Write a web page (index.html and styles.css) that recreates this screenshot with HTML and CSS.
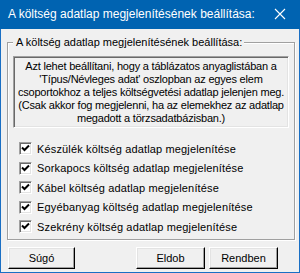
FILE: index.html
```html
<!DOCTYPE html>
<html>
<head>
<meta charset="utf-8">
<link rel="stylesheet" href="styles.css">
</head>
<body>
<div class="window">
  <div class="titlebar">
    <span class="title">A költség adatlap megjelenítésének beállítása:</span>
    <svg class="close" width="12" height="12" viewBox="0 0 12 12"><path d="M1 1L11 11M11 1L1 11" stroke="#fff" stroke-width="1.1" fill="none"/></svg>
  </div>
  <div class="body">
    <div class="group">
      <span class="legend">A költség adatlap megjelenítésének beállítása:</span>
      <div class="info">Azt lehet beállítani, hogy a táblázatos anyaglistában a<br>'Típus/Névleges adat' oszlopban az egyes elem<br>csoportokhoz a teljes költségvetési adatlap jelenjen meg.<br>(Csak akkor fog megjelenni, ha az elemekhez az adatlap<br>megadott a törzsadatbázisban.)</div>
      <div class="checks">
        <div class="check"><span class="box"><svg width="9" height="9" viewBox="0 0 9 9"><path d="M1 3.5L3.5 6L8 1.5" stroke="#000" stroke-width="2" fill="none"/></svg></span>Készülék költség adatlap megjelenítése</div>
        <div class="check"><span class="box"><svg width="9" height="9" viewBox="0 0 9 9"><path d="M1 3.5L3.5 6L8 1.5" stroke="#000" stroke-width="2" fill="none"/></svg></span>Sorkapocs költség adatlap megjelenítése</div>
        <div class="check"><span class="box"><svg width="9" height="9" viewBox="0 0 9 9"><path d="M1 3.5L3.5 6L8 1.5" stroke="#000" stroke-width="2" fill="none"/></svg></span>Kábel költség adatlap megjelenítése</div>
        <div class="check"><span class="box"><svg width="9" height="9" viewBox="0 0 9 9"><path d="M1 3.5L3.5 6L8 1.5" stroke="#000" stroke-width="2" fill="none"/></svg></span>Egyébanyag költség adatlap megjelenítése</div>
        <div class="check"><span class="box"><svg width="9" height="9" viewBox="0 0 9 9"><path d="M1 3.5L3.5 6L8 1.5" stroke="#000" stroke-width="2" fill="none"/></svg></span>Szekrény költség adatlap megjelenítése</div>
      </div>
    </div>
    <div class="buttons">
      <button class="btn btn-help">Súgó</button>
      <span class="spacer"></span>
      <button class="btn">Eldob</button>
      <button class="btn">Rendben</button>
    </div>
  </div>
</div>
</body>
</html>
```
FILE: styles.css
```css
* { box-sizing: border-box; }
html, body { margin: 0; padding: 0; }
body { width: 300px; height: 273px; overflow: hidden; font-family: "Liberation Sans", Arial, sans-serif; }
.window {
  width: 300px; height: 273px;
  background: #f0f0f0;
  border: 1px solid #1a6fc4;
  border-top: none;
  display: flex; flex-direction: column;
}
.titlebar {
  height: 29px; margin: 0 -1px;
  background: #0063b1;
  color: #fff;
  display: flex; align-items: center;
  padding: 0 0 1px 8px;
  font-size: 12px;
}
.title { flex: 1; }
.close { margin-right: 14px; }
.body { flex: 1; display: flex; flex-direction: column; padding: 13px 4px 0 6px; font-size: 11px; color: #000; }
.group {
  position: relative;
  height: 198px;
  border: 1px solid #a0a0a0;
  box-shadow: 1px 1px 0 #fff, inset 1px 1px 0 #fff;
  padding: 13px 5px 0 5px;
}
.legend {
  position: absolute; left: 5px; top: -7px;
  background: #f0f0f0; padding: 0 2px 0 3px;
  line-height: 13px;
}
.info {
  height: 72px;
  border: 1px solid;
  border-color: #a0a0a0 #fff #fff #a0a0a0;
  box-shadow: inset 1px 1px 0 #696969, inset -1px -1px 0 #e3e3e3;
  text-align: center;
  line-height: 13px;
  letter-spacing: -0.2px;
  white-space: nowrap;
  padding: 3px 0 0 0;
}
.checks { display: flex; flex-direction: column; gap: 6.5px; padding: 14px 0 0 6px; }
.check { display: flex; align-items: center; height: 13px; gap: 5px; letter-spacing: 0.15px; }
.box {
  width: 13px; height: 13px; background: #fff;
  border: 1px solid; border-color: #a0a0a0 #fff #fff #a0a0a0;
  box-shadow: inset 1px 1px 0 #696969, inset -1px -1px 0 #e3e3e3;
  display: flex; align-items: center; justify-content: center;
}
.box svg { display: block; }
.buttons { display: flex; gap: 4px; padding: 7px 17px 0 1px; }
.spacer { flex: 1; }
.btn {
  width: 69px; height: 22px;
  font-family: inherit; font-size: 11px; color: #000;
  background: #f0f0f0;
  border: 1px solid; border-color: #fff #000 #000 #fff;
  box-shadow: inset -1px -1px 0 #a0a0a0, inset 1px 1px 0 #e3e3e3;
  padding: 0;
}
.btn-help { width: 67px; }
```
